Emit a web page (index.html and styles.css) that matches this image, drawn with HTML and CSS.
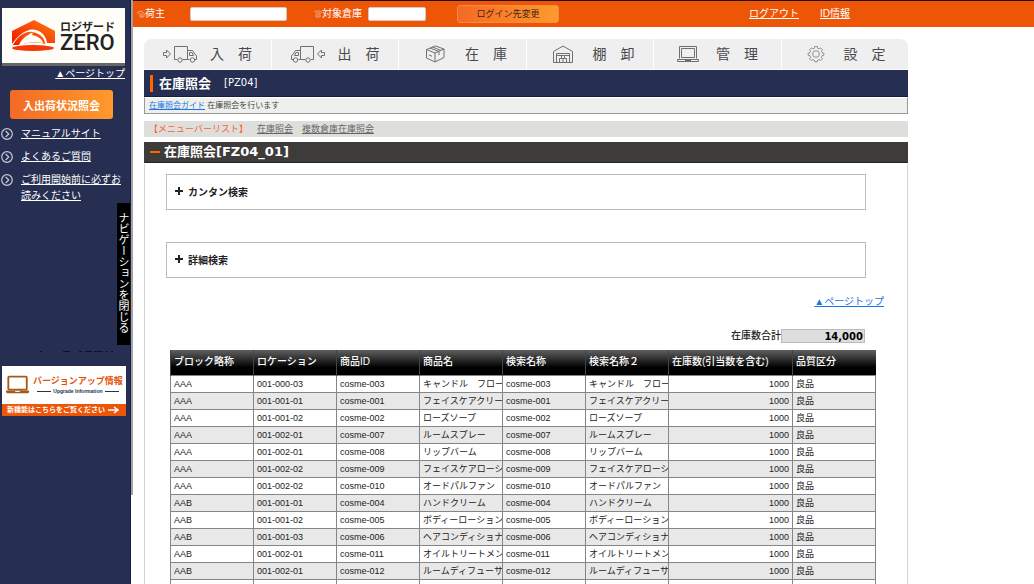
FILE: index.html
```html
<!DOCTYPE html>
<html lang="ja">
<head>
<meta charset="utf-8">
<title>在庫照会 [PZ04]</title>
<link rel="stylesheet" href="styles.css">
</head>
<body>
<div class="app">
  <aside class="sidebar">
    <a class="logo" href="#">
      <svg class="logo-mark" width="44" height="32" viewBox="0 0 44 32" aria-hidden="true">
        <defs><linearGradient id="lg" x1="0" y1="1" x2="1" y2="0"><stop offset="0" stop-color="#f01800"/><stop offset="1" stop-color="#ff7a10"/></linearGradient></defs>
        <path d="M0 11L22 0L43 11V23H35C34 14 26 8 17 10C10 12 5 17 0 24Z" fill="url(#lg)"/>
        <path d="M1 25C6 16 13 11 20 12C28 13 33 18 33 24C28 22 18 22 12 24C14 19 16 16 19 14C13 16 9 20 7 25Z" fill="url(#lg)"/>
        <path d="M12 24C13 19 15 16 19 13C25 14 30 18 31 23C25 22 18 22 12 24Z" fill="#fffdf8"/>
        <path d="M21 13C27 14 31 18 32 23C30 19 26 16 20 15Z" fill="#f4480a"/>
        <ellipse cx="21" cy="28" rx="21" ry="3" fill="#f4380a"/>
      </svg>
      <span class="logo-text"><span class="logo-kana">ロジザード</span><span class="logo-zero">ZERO</span></span>
    </a>
    <a class="side-top" href="#">▲ページトップ</a>
    <button class="status-btn" type="button">入出荷状況照会</button>
    <ul class="side-links">
      <li><svg class="bullet" viewBox="0 0 12 12" aria-hidden="true"><circle cx="6" cy="6" r="5.3"/><path d="M4.6 3L7.8 6L4.6 9"/></svg><a href="#">マニュアルサイト</a></li>
      <li><svg class="bullet" viewBox="0 0 12 12" aria-hidden="true"><circle cx="6" cy="6" r="5.3"/><path d="M4.6 3L7.8 6L4.6 9"/></svg><a href="#">よくあるご質問</a></li>
      <li><svg class="bullet" viewBox="0 0 12 12" aria-hidden="true"><circle cx="6" cy="6" r="5.3"/><path d="M4.6 3L7.8 6L4.6 9"/></svg><a href="#">ご利用開始前に必ずお読みください</a></li>
    </ul>
    <button class="nav-close" type="button">ナビゲーションを閉じる</button>
    <svg class="dashes" width="80" height="2" viewBox="0 0 80 2" aria-hidden="true"><path d="M5 .5h2M28 .5h7M44 .5h3M50 .5h7M59 .5h9M71 .5h2M76 .5h2" stroke="#0c122b"/></svg>
    <a class="banner" href="#">
      <span class="banner-main">
        <svg width="24" height="20" viewBox="0 0 26 20" aria-hidden="true"><rect x="2.5" y="1" width="20" height="14" rx="1" fill="#fff" stroke="#a55a1c" stroke-width="2"/><path d="M0 16H25V17Q25 19 23 19H2Q0 19 0 17Z" fill="#a55a1c"/><path d="M10 17h5" stroke="#fff"/></svg>
        <span class="banner-copy"><span class="banner-title">バージョンアップ情報</span><span class="banner-en">Upgrade Information</span></span>
      </span>
      <span class="banner-foot">新機能はこちらをご覧ください<svg width="11" height="8" viewBox="0 0 11 8" aria-hidden="true"><path d="M0 4H10M6 1L10 4L6 7" fill="none" stroke="#fff" stroke-width="1.5"/></svg></span>
    </a>
  </aside>
  <div class="rail"></div>
  <div class="page">
    <header class="topbar">
      <div class="field owner">
        <label for="owner"><svg class="ghost" viewBox="0 0 8 8" aria-hidden="true"><path d="M1 4V2L4 1L7 3V7H3V4H5V7"/></svg>荷主</label>
        <input id="owner" type="text">
      </div>
      <div class="field depot">
        <label for="depot"><svg class="ghost" viewBox="0 0 8 8" aria-hidden="true"><path d="M0 2L2 1H6L8 3M2 3H6V7H2V4M4 4V6"/></svg>対象倉庫</label>
        <input id="depot" type="text">
      </div>
      <button class="login-btn" type="button">ログイン先変更</button>
      <nav class="account"><a href="#">ログアウト</a><a href="#">ID情報</a></nav>
    </header>
    <main class="content">
      <nav class="tabs">
        <a href="#"><svg class="tab-icon" viewBox="0 0 36 20" aria-hidden="true"><path d="M1.500 8.500h3v-2.500l4 4l-4 4v-2.500h-3zM12.500 2.500h13v13h-5M15 15.500h-2.500v-13M25.500 6.500h5l2.500 4l1.500 1v4h-1.500M27.500 15.500h-2M27.500 8.500h2.500l1.500 3h-4z"/><circle cx="18" cy="16" r="2.200"/><circle cx="30.500" cy="16" r="2.200"/></svg><span>入　荷</span></a>
        <a href="#"><svg class="tab-icon" viewBox="0 0 36 20" aria-hidden="true"><path d="M34.500 8.500h-3v-2.500l-4 4l4 4v-2.500h3zM23.500 2.500h-13v13h5M21 15.500h2.500v-13M10.500 6.500h-5l-2.500 4l-1.500 1v4h1.500M8.500 15.500h2M8.500 8.500h-2.500l-1.500 3h4z"/><circle cx="18" cy="16" r="2.200"/><circle cx="5.500" cy="16" r="2.200"/></svg><span>出　荷</span></a>
        <a href="#"><svg class="tab-icon" viewBox="0 0 36 20" aria-hidden="true"><path d="M9.500 5.500L18.500 2l8.500 3v8.500l-9 4.500l-8.500-4zM9.500 5.500l8.500 3.500l9-4M18 9v9M13 4l9 3.500v3.500M15.500 3l8.500 3.500M12 11l3 1.200"/></svg><span>在　庫</span></a>
        <a href="#"><svg class="tab-icon" viewBox="0 0 36 20" aria-hidden="true"><path d="M8.500 18.500v-11l9.500-5.500l9.500 5.500v11zM11.500 18.500v-9h13v9M11.500 11.500h13M14.500 18.500v-4h7v4M18 14.500v4M16.500 11.500v3h3v-3"/></svg><span>棚　卸</span></a>
        <a href="#"><svg class="tab-icon narrow" viewBox="2 0 32 20" aria-hidden="true"><path d="M9.500 14.500v-12h17v12M11.500 13.500v-9h13v9zM7.500 15.500h21v2h-21zM15 16.500h6"/></svg><span>管　理</span></a>
        <a href="#"><svg class="tab-icon narrow gear" viewBox="0 -1 36 24" aria-hidden="true"><path d="M16.500 2h3l.5 2.200l1.700.7l2-1.200l2 2l-1.200 2l.7 1.700l2.200.6v2.500l-2.200.6l-.7 1.700l1.200 2l-2 2l-2-1.200l-1.700.7l-.5 2h-3l-.5-2l-1.700-.7l-2 1.200l-2-2l1.200-2l-.7-1.700l-2.200-.6v-2.500l2.200-.6l.7-1.700l-1.200-2l2-2l2 1.200l1.700-.7z"/><circle cx="18" cy="11" r="4"/></svg><span>設　定</span></a>
      </nav>
      <div class="page-title"><h1>在庫照会</h1><span class="code">[PZ04]</span></div>
      <p class="guide"><a href="#">在庫照会ガイド</a> 在庫照会を行います</p>
      <nav class="menubar"><span class="menubar-label">【メニューバーリスト】</span><a href="#">在庫照会</a><a href="#">複数倉庫在庫照会</a></nav>
      <h2 class="section-title">在庫照会[FZ04_01]</h2>
      <section class="panel">
        <button class="fold" type="button"><span class="plus"></span>カンタン検索</button>
        <button class="fold" type="button"><span class="plus"></span>詳細検索</button>
        <a class="pagetop" href="#">▲ページトップ</a>
        <div class="total"><label for="total">在庫数合計</label><input id="total" type="text" value="14,000" readonly></div>
        <table class="stock">
          <colgroup><col class="c"><col class="c"><col class="c"><col class="c"><col class="c"><col class="c"><col class="wide"><col class="c"></colgroup>
          <thead><tr><th>ブロック略称</th><th>ロケーション</th><th>商品ID</th><th>商品名</th><th>検索名称</th><th>検索名称２</th><th>在庫数(引当数を含む)</th><th>品質区分</th></tr></thead>
          <tbody>
            <tr><td>AAA</td><td>001-000-03</td><td>cosme-003</td><td>キャンドル　フロー</td><td>cosme-003</td><td>キャンドル　フロー</td><td class="num">1000</td><td>良品</td></tr>
            <tr><td>AAA</td><td>001-001-01</td><td>cosme-001</td><td>フェイスケアクリー</td><td>cosme-001</td><td>フェイスケアクリー</td><td class="num">1000</td><td>良品</td></tr>
            <tr><td>AAA</td><td>001-001-02</td><td>cosme-002</td><td>ローズソープ</td><td>cosme-002</td><td>ローズソープ</td><td class="num">1000</td><td>良品</td></tr>
            <tr><td>AAA</td><td>001-002-01</td><td>cosme-007</td><td>ルームスプレー</td><td>cosme-007</td><td>ルームスプレー</td><td class="num">1000</td><td>良品</td></tr>
            <tr><td>AAA</td><td>001-002-01</td><td>cosme-008</td><td>リップバーム</td><td>cosme-008</td><td>リップバーム</td><td class="num">1000</td><td>良品</td></tr>
            <tr><td>AAA</td><td>001-002-02</td><td>cosme-009</td><td>フェイスケアローシ</td><td>cosme-009</td><td>フェイスケアローシ</td><td class="num">1000</td><td>良品</td></tr>
            <tr><td>AAA</td><td>001-002-02</td><td>cosme-010</td><td>オードパルファン</td><td>cosme-010</td><td>オードパルファン</td><td class="num">1000</td><td>良品</td></tr>
            <tr><td>AAB</td><td>001-001-01</td><td>cosme-004</td><td>ハンドクリーム</td><td>cosme-004</td><td>ハンドクリーム</td><td class="num">1000</td><td>良品</td></tr>
            <tr><td>AAB</td><td>001-001-02</td><td>cosme-005</td><td>ボディーローション</td><td>cosme-005</td><td>ボディーローション</td><td class="num">1000</td><td>良品</td></tr>
            <tr><td>AAB</td><td>001-001-03</td><td>cosme-006</td><td>ヘアコンディショナ</td><td>cosme-006</td><td>ヘアコンディショナ</td><td class="num">1000</td><td>良品</td></tr>
            <tr><td>AAB</td><td>001-002-01</td><td>cosme-011</td><td>オイルトリートメン</td><td>cosme-011</td><td>オイルトリートメン</td><td class="num">1000</td><td>良品</td></tr>
            <tr><td>AAB</td><td>001-002-01</td><td>cosme-012</td><td>ルームディフューサ</td><td>cosme-012</td><td>ルームディフューサ</td><td class="num">1000</td><td>良品</td></tr>
            <tr><td></td><td></td><td></td><td></td><td></td><td></td><td></td><td></td></tr>
          </tbody>
        </table>
      </section>
    </main>
  </div>
</div>
</body>
</html>
```
FILE: styles.css
```css
* { box-sizing: border-box; }
body {
  margin: 0;
  background: #fff;
  color: #222;
  font: 10px/16px "Liberation Sans", "Noto Sans CJK JP", sans-serif;
}
button, input { font-family: inherit; margin: 0; }
.app { display: flex; height: 100vh; overflow: hidden; }

/* sidebar */
.sidebar {
  position: relative;
  display: flex;
  flex-direction: column;
  flex: none;
  width: 131px;
  padding-top: 8px;
  background: #262f52;
  border-right: 1px solid #141d4a;
}
.rail { flex: none; width: 2px; height: 495px; background: #a3a3a3; }
.logo {
  display: flex;
  align-items: center;
  gap: 4px;
  height: 58px;
  margin: 0 5px 0 2px;
  padding-left: 10px;
  background: #fffdf8;
  border-bottom: 3px solid #666;
  color: #222;
  text-decoration: none;
}
.logo-text { display: flex; flex-direction: column; }
.logo-kana { font-size: 11px; line-height: 14px; font-weight: 700; }
.logo-zero { font: 500 22px/18px "Roboto", sans-serif; }
.side-top { align-self: flex-end; margin-right: 5px; color: #fff; }
.status-btn {
  width: 103px;
  height: 29px;
  margin: 8px 0 0 10px;
  padding: 0;
  border: 0;
  border-radius: 3px;
  background: linear-gradient(90deg, #f36a25, #ff9a2c);
  color: #fff;
  font-size: 11px;
  font-weight: 700;
}
.side-links {
  display: flex;
  flex-direction: column;
  gap: 7px;
  margin: 7px 0 0;
  padding: 0 8px 0 1px;
  list-style: none;
}
.side-links li { display: flex; gap: 8px; }
.side-links a { color: #fff; }
.bullet { flex: none; width: 12px; height: 12px; margin-top: 2px; fill: none; stroke: #c6cad8; stroke-width: 1.2; }
.nav-close {
  position: absolute;
  top: 203px;
  right: 0;
  width: 13px;
  height: 142px;
  padding: 0 2px 4px 0;
  border: 0;
  background: #000;
  color: #fff;
  font-size: 11px;
  line-height: 11px;
  writing-mode: vertical-rl;
}
.dashes { margin: 147px 0 0 35px; }
.banner {
  display: flex;
  flex-direction: column;
  margin: 13px 4px 0 2px;
  background: #fff;
  text-decoration: none;
}
.banner-main { display: flex; align-items: center; gap: 3px; height: 38px; padding-left: 4px; }
.banner-copy { display: flex; flex-direction: column; }
.banner-title { color: #e5520c; font-size: 9px; line-height: 12px; font-weight: 700; white-space: nowrap; }
.banner-en {
  display: flex;
  align-items: center;
  justify-content: center;
  gap: 2px;
  color: #27304f;
  font-size: 5px;
  line-height: 8px;
  font-weight: 700;
  white-space: nowrap;
}
.banner-en::before, .banner-en::after { content: ""; width: 14px; height: 1px; background: #27304f; }
.banner-foot {
  display: flex;
  align-items: center;
  justify-content: space-between;
  height: 12px;
  padding: 0 7px 0 5px;
  background: #ee5607;
  color: #fff;
  font-size: 7px;
  line-height: 12px;
  font-weight: 700;
  white-space: nowrap;
}

/* top bar */
.page { flex: 1; min-width: 0; }
.topbar {
  display: flex;
  align-items: center;
  height: 27px;
  padding-left: 4px;
  background: #ee5607;
  border-top: 1px solid #201008;
  color: #fff;
}
.field, .field label { display: flex; align-items: center; white-space: nowrap; }
.field input { height: 14px; padding: 0 3px; border: 1px solid #d8c8c0; border-radius: 2px; background: #fff; }
.owner { gap: 25px; }
.owner input { width: 97px; }
.depot { gap: 6px; margin-left: 27px; }
.depot input { width: 58px; }
.ghost { width: 8px; height: 8px; fill: none; stroke: #f5a27c; }
.login-btn {
  width: 102px;
  height: 18px;
  margin-left: 31px;
  padding: 0;
  border: 1px solid #f58a45;
  border-radius: 3px;
  background: linear-gradient(90deg, #f36a25, #ff9a2c);
  color: #432414;
  font-size: 9px;
  line-height: 14px;
}
.account { display: flex; gap: 21px; margin-left: 190px; }
.account a { color: #fff; white-space: nowrap; }

/* main column */
.content { max-width: 775px; padding: 12px 0 0 11px; }
.tabs { display: flex; gap: 1px; border-radius: 8px 8px 0 0; overflow: hidden; }
.tabs a {
  display: flex;
  flex: 1;
  align-items: center;
  gap: 12px;
  height: 30px;
  padding-left: 18px;
  background: #efefef;
  color: #4a4a4e;
  font-size: 14px;
  text-decoration: none;
  white-space: nowrap;
}
.tab-icon { flex: none; width: 36px; height: 20px; fill: none; stroke: #707074; stroke-width: 1; }
.tab-icon.narrow { width: 32px; }
.gear { stroke: #808084; }
.page-title {
  display: flex;
  align-items: center;
  gap: 13px;
  height: 27px;
  margin-top: 1px;
  padding-left: 6px;
  background: #262f52;
  border-bottom: 1px solid #141d3c;
  color: #fff;
}
.page-title h1 {
  margin: 0;
  padding-left: 6px;
  border-left: 3px solid #f60;
  font-size: 13px;
  line-height: 17px;
}
.code { font: 10px/16px "DejaVu Sans", sans-serif; }
.guide {
  margin: 0;
  padding: 0 4px;
  background: #eef0ec;
  border: 1px solid #999;
  border-top-color: #fff;
  color: #444;
  font-size: 8px;
  line-height: 15px;
}
.guide a, .pagetop { color: #1a73e8; }
.menubar {
  display: flex;
  gap: 9px;
  margin-top: 7px;
  padding-left: 5px;
  background: #dededa;
  font-size: 9px;
}
.menubar-label { color: #fa6432; }
.menubar a { color: #666; }
.section-title {
  display: flex;
  align-items: center;
  gap: 4px;
  height: 21px;
  margin: 5px 0 1px;
  padding-left: 6px;
  background: #3d3c3a;
  border-bottom: 1px solid #222;
  color: #fff;
  font: 700 13px/20px "DejaVu Sans", "Noto Sans CJK JP", sans-serif;
}
.section-title::before { content: ""; width: 10px; height: 2px; background: #f60; }
.panel {
  display: flex;
  flex-direction: column;
  padding: 10px 34px 0 25px;
  border: solid #d4d4d4;
  border-width: 0 1px;
}
.fold {
  display: flex;
  align-items: center;
  gap: 5px;
  height: 36px;
  margin: 0 7px 32px -4px;
  padding: 0 8px 2px;
  border: 1px solid #bbb;
  background: #fff;
  color: #222;
  font-size: 10px;
  font-weight: 700;
}
.plus {
  width: 8px;
  height: 8px;
  background: linear-gradient(#222, #222) 50% / 8px 2px no-repeat, linear-gradient(#222, #222) 50% / 2px 8px no-repeat;
}
.pagetop { align-self: flex-end; margin: -16px -11px 0 0; }
.total { display: flex; align-items: center; align-self: flex-end; margin: 18px 8px 0 0; font-weight: 500; }
.total input {
  width: 84px;
  height: 14px;
  padding: 0 1px;
  border: 1px solid #bbb;
  background: #ddd;
  color: #000;
  font: 700 10px/12px "DejaVu Sans", sans-serif;
  text-align: right;
}
.stock { width: 100%; margin-top: 6px; border-collapse: collapse; table-layout: fixed; font-size: 9px; line-height: 16px; }
.c { width: 83px; }
.stock .wide { width: 124px; }
.stock th {
  height: 25px;
  padding: 0 3px;
  border-left: 1px solid #444;
  background: linear-gradient(#606060, #000 70%);
  color: #fff;
  font-size: 10px;
  font-weight: 500;
  text-align: left;
  white-space: nowrap;
}
.stock td {
  height: 17px;
  padding: 0 0 0 3px;
  border: 1px solid #858585;
  overflow: hidden;
  white-space: nowrap;
}
.stock tbody tr:nth-child(even) { background: #e8e8e8; }
.stock .num { padding-right: 3px; text-align: right; }
```
